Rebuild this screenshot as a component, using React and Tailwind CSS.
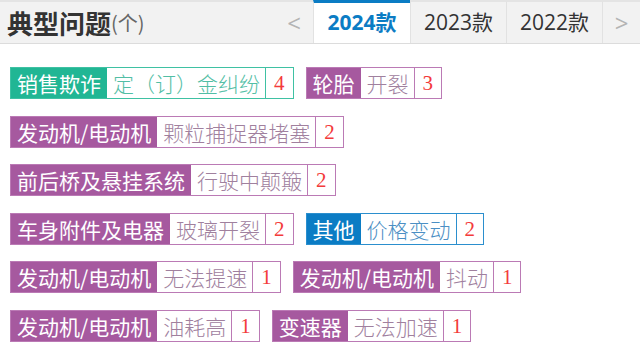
import React from "react";

const themes = {
  teal: { bg: "bg-[#21b694]", border: "border-[#3fc1a3]", text: "text-[#52bea5]" },
  purple: { bg: "bg-[#a6599f]", border: "border-[#bb7ab5]", text: "text-[#a0809e]" },
  blue: { bg: "bg-[#0b7cc4]", border: "border-[#2b8fce]", text: "text-[#4b8fc4]" },
};

const rows = [
  [
    { t: "teal", label: "销售欺诈", value: "定（订）金纠纷", n: 4 },
    { t: "purple", label: "轮胎", value: "开裂", n: 3 },
  ],
  [{ t: "purple", label: "发动机/电动机", value: "颗粒捕捉器堵塞", n: 2 }],
  [{ t: "purple", label: "前后桥及悬挂系统", value: "行驶中颠簸", n: 2 }],
  [
    { t: "purple", label: "车身附件及电器", value: "玻璃开裂", n: 2 },
    { t: "blue", label: "其他", value: "价格变动", n: 2 },
  ],
  [
    { t: "purple", label: "发动机/电动机", value: "无法提速", n: 1 },
    { t: "purple", label: "发动机/电动机", value: "抖动", n: 1 },
  ],
  [
    { t: "purple", label: "发动机/电动机", value: "油耗高", n: 1 },
    { t: "purple", label: "变速器", value: "无法加速", n: 1 },
  ],
];

function Tag({ t, label, value, n }) {
  const c = themes[t];
  return (
    <div className={`flex h-[32px] border ${c.border} text-[21px] leading-[30px]`}>
      <span className={`${c.bg} text-white px-[6px]`}>{label}</span>
      <span className={`bg-white ${c.text} pl-[6px] pr-[5px] font-light`}>{value}</span>
      <span
        className={`bg-white border-l ${c.border} text-[#f33b3b] px-[8px]`}
        style={{ fontFamily: '"Liberation Serif", serif' }}
      >
        {n}
      </span>
    </div>
  );
}

export default function App() {
  const cjk = { fontFamily: '"Noto Sans CJK SC", sans-serif' };
  return (
    <div className="w-[640px] h-[349px] bg-white overflow-hidden" style={cjk}>
      <div className="flex h-[44px] bg-[#f2f2f2] border-b border-[#dcdcdc]">
        <div className="flex-1 flex items-center pl-[7px] border-t-2 border-[#e4e4e4] text-[#333]">
          <span className="text-[26px] font-bold leading-none">典型问题</span>
          <span className="text-[20px] text-[#666] leading-none">(个)</span>
        </div>
        <div
          className="w-[38px] flex items-center justify-center border-t-2 border-[#e4e4e4] text-[24px] text-[#b4b4b4]"
          style={{ fontFamily: '"Open Sans", sans-serif' }}
        >
          &lt;
        </div>
        <div
          className="w-[97px] flex items-center justify-center bg-white border-t-[3px] border-t-[#0b7cc4] border-l border-l-[#e2e2e2] text-[21px] font-bold text-[#0b7cc4]"
          style={{ fontFamily: '"Open Sans", "Noto Sans CJK SC", sans-serif' }}
        >
          2024款
        </div>
        {["2023款", "2022款"].map((y) => (
          <div
            key={y}
            className="w-[96px] flex items-center justify-center border-t-2 border-t-[#e4e4e4] border-l border-l-[#e2e2e2] text-[21px] text-[#333]"
            style={{ fontFamily: '"Open Sans", "Noto Sans CJK SC", sans-serif' }}
          >
            {y}
          </div>
        ))}
        <div
          className="w-[38px] flex items-center justify-center border-t-2 border-t-[#e4e4e4] border-l border-l-[#e2e2e2] text-[24px] text-[#b4b4b4]"
          style={{ fontFamily: '"Open Sans", sans-serif' }}
        >
          &gt;
        </div>
      </div>
      <div className="flex flex-col gap-[16.6px] pt-[23px] pl-[10px]">
        {rows.map((r, i) => (
          <div key={i} className="flex gap-[12px]">
            {r.map((tag, j) => (
              <Tag key={j} {...tag} />
            ))}
          </div>
        ))}
      </div>
    </div>
  );
}
